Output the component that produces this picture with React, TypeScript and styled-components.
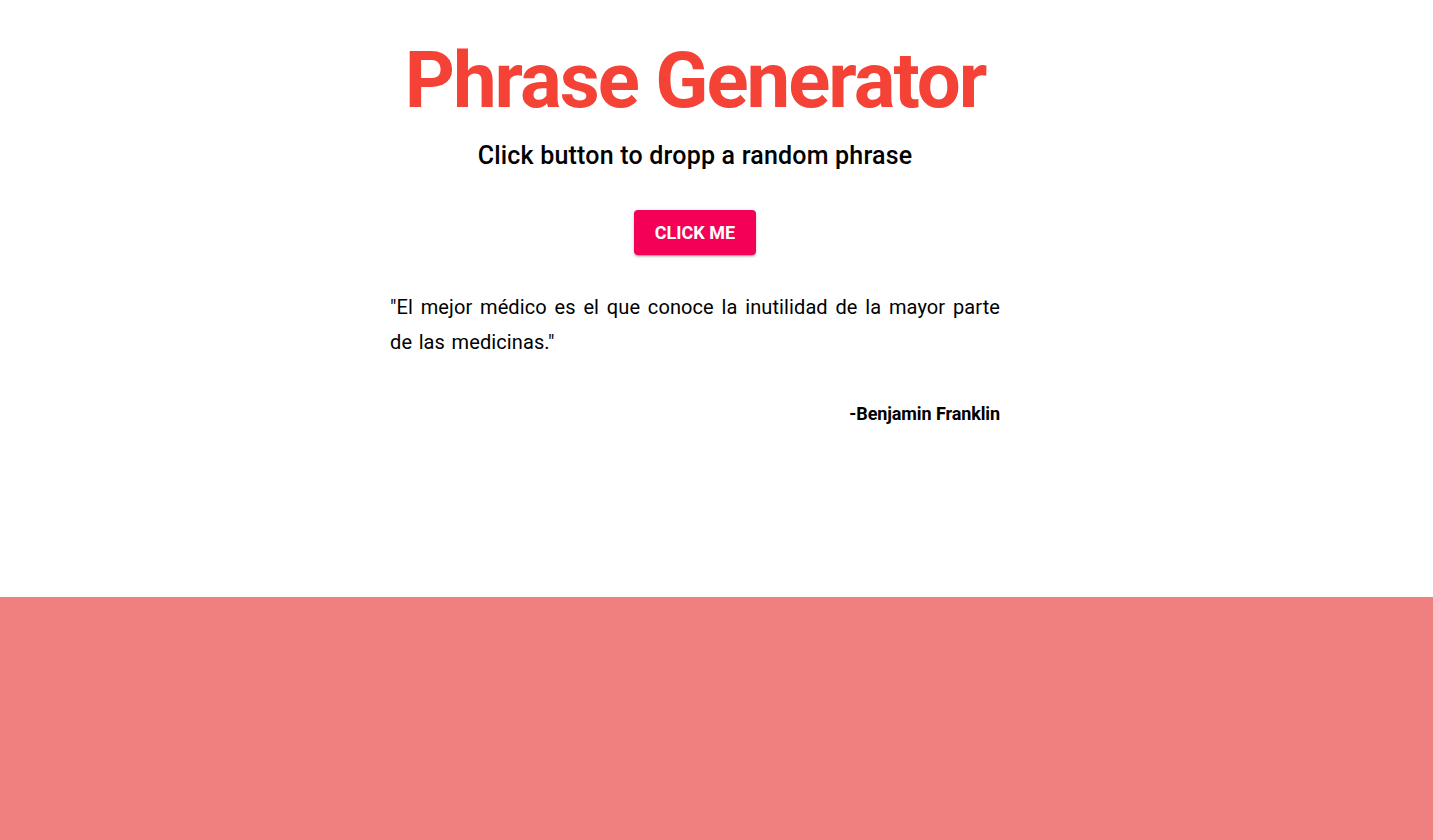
import React from "react";
import styled, { createGlobalStyle } from "styled-components";

const Global = createGlobalStyle`
  html, body { margin: 0; padding: 0; }
  body { font-family: Roboto, "Liberation Sans", Arial, sans-serif; background: #fff; }
`;

const Page = styled.div`
  display: flex;
  flex-direction: column;
  min-height: 840px;
`;

const Main = styled.main`
  height: 597px;
  display: flex;
  flex-direction: column;
  align-items: center;
  padding-right: 43px;
  box-sizing: border-box;
`;

const Title = styled.h1`
  margin: 34px 0 0;
  font-size: 78px;
  line-height: 94px;
  font-weight: 700;
  letter-spacing: -2px;
  color: #f44336;
`;

const Subtitle = styled.h2`
  margin: 10px 0 0;
  font-size: 25px;
  line-height: 36px;
  font-weight: 500;
  letter-spacing: 0.2px;
  color: #000;
`;

const Button = styled.button`
  margin-top: 36px;
  background: #f50057;
  color: #fff;
  border: none;
  border-radius: 4px;
  padding: 0;
  width: 122px;
  height: 45px;
  font-family: Roboto, sans-serif;
  font-size: 18px;
  font-weight: 700;
  letter-spacing: 0;
  text-transform: uppercase;
  cursor: pointer;
  box-shadow: 0px 3px 1px -2px rgba(0,0,0,0.2), 0px 2px 2px 0px rgba(0,0,0,0.14), 0px 1px 5px 0px rgba(0,0,0,0.12);
`;

const Quote = styled.section`
  width: 610px;
  margin-top: 35px;
`;

const Text = styled.p`
  margin: 0;
  font-size: 20px;
  line-height: 35px;
  text-align: justify;
  letter-spacing: 0.1px;
  word-spacing: 1.5px;
  color: #000;
`;

const Author = styled.p`
  margin: 43px 0 0;
  font-size: 18px;
  font-weight: 700;
  letter-spacing: -0.1px;
  text-align: right;
  color: #000;
`;

const Band = styled.footer`
  flex: 1;
  background: #f08080;
`;

export default function App() {
  return (
    <>
      <Global />
      <Page>
        <Main>
          <Title>Phrase Generator</Title>
          <Subtitle>Click button to dropp a random phrase</Subtitle>
          <Button>Click me</Button>
          <Quote>
            <Text>
              "El mejor médico es el que conoce la inutilidad de la mayor parte de las medicinas."
            </Text>
            <Author>-Benjamin Franklin</Author>
          </Quote>
        </Main>
        <Band />
      </Page>
    </>
  );
}
